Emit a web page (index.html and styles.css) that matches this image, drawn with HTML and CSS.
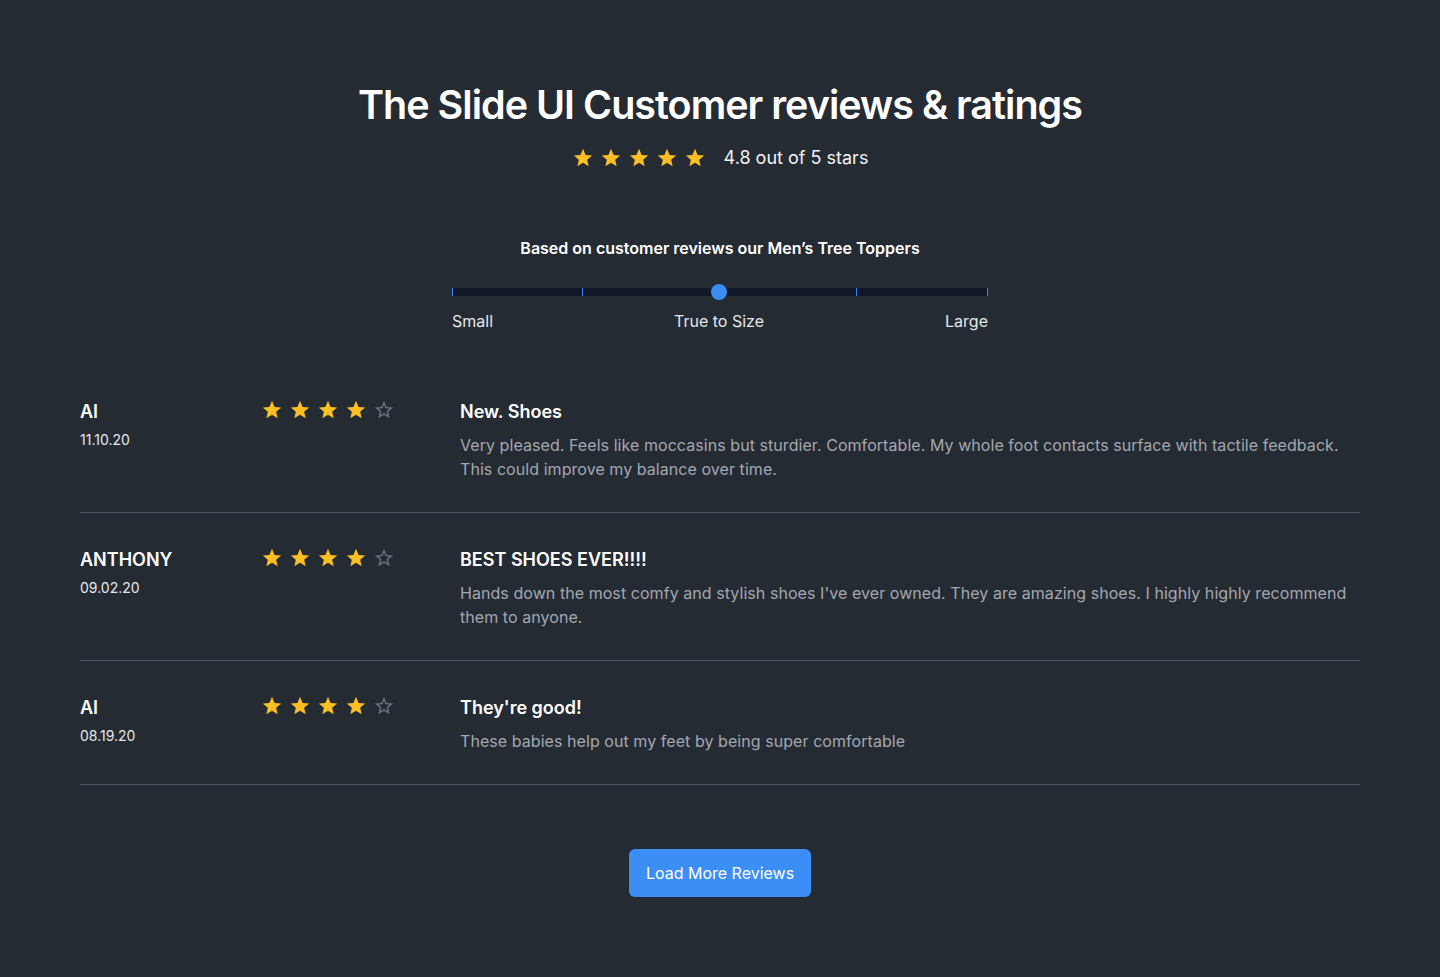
FILE: index.html
```html
<!DOCTYPE html>
<html lang="en">
<head>
<meta charset="utf-8">
<title>Customer reviews</title>
<link rel="stylesheet" href="styles.css">
</head>
<body>
<svg width="0" height="0" class="defs" aria-hidden="true">
  <defs>
    <symbol id="star" viewBox="0 0 24 24"><path d="M12 17.27L18.18 21l-1.64-7.03L22 9.24l-7.19-.61L12 2 9.19 8.63 2 9.24l5.46 4.73L5.82 21z"/></symbol>
    <symbol id="star-o" viewBox="0 0 24 24"><path d="M22 9.24l-7.19-.62L12 2 9.19 8.63 2 9.24l5.46 4.73L5.82 21 12 17.27 18.18 21l-1.63-7.03L22 9.24zM12 15.4l-3.76 2.27 1-4.28-3.32-2.88 4.38-.38L12 6.1l1.71 4.04 4.38.38-3.32 2.88 1 4.28L12 15.4z"/></symbol>
  </defs>
</svg>
<main class="page">
  <header class="header">
    <h1 class="title">The Slide UI Customer reviews &amp; ratings</h1>
    <div class="summary">
      <div class="stars">
        <svg class="star on"><use href="#star"/></svg>
        <svg class="star on"><use href="#star"/></svg>
        <svg class="star on"><use href="#star"/></svg>
        <svg class="star on"><use href="#star"/></svg>
        <svg class="star on"><use href="#star"/></svg>
      </div>
      <span class="summary-text">4.8 out of 5 stars</span>
    </div>
  </header>

  <section class="fit">
    <p class="fit-title">Based on customer reviews our Men’s Tree Toppers</p>
    <div class="track">
      <span class="tick t0"></span>
      <span class="tick t1"></span>
      <span class="tick t2"></span>
      <span class="tick t3"></span>
      <span class="dot"></span>
    </div>
    <div class="fit-labels">
      <span>Small</span>
      <span>True to Size</span>
      <span>Large</span>
    </div>
  </section>

  <section class="reviews">
    <article class="review">
      <div class="author">
        <div class="name">AI</div>
        <div class="date">11.10.20</div>
      </div>
      <div class="stars small">
        <svg class="star on"><use href="#star"/></svg>
        <svg class="star on"><use href="#star"/></svg>
        <svg class="star on"><use href="#star"/></svg>
        <svg class="star on"><use href="#star"/></svg>
        <svg class="star off"><use href="#star-o"/></svg>
      </div>
      <div class="content">
        <h3 class="review-title">New. Shoes</h3>
        <p class="review-body">Very pleased. Feels like moccasins but sturdier. Comfortable. My whole foot contacts surface with tactile feedback. This could improve my balance over time.</p>
      </div>
    </article>
    <article class="review">
      <div class="author">
        <div class="name">ANTHONY</div>
        <div class="date">09.02.20</div>
      </div>
      <div class="stars small">
        <svg class="star on"><use href="#star"/></svg>
        <svg class="star on"><use href="#star"/></svg>
        <svg class="star on"><use href="#star"/></svg>
        <svg class="star on"><use href="#star"/></svg>
        <svg class="star off"><use href="#star-o"/></svg>
      </div>
      <div class="content">
        <h3 class="review-title">BEST SHOES EVER!!!!</h3>
        <p class="review-body">Hands down the most comfy and stylish shoes I've ever owned. They are amazing shoes. I highly highly recommend them to anyone.</p>
      </div>
    </article>
    <article class="review">
      <div class="author">
        <div class="name">AI</div>
        <div class="date">08.19.20</div>
      </div>
      <div class="stars small">
        <svg class="star on"><use href="#star"/></svg>
        <svg class="star on"><use href="#star"/></svg>
        <svg class="star on"><use href="#star"/></svg>
        <svg class="star on"><use href="#star"/></svg>
        <svg class="star off"><use href="#star-o"/></svg>
      </div>
      <div class="content">
        <h3 class="review-title">They're good!</h3>
        <p class="review-body">These babies help out my feet by being super comfortable</p>
      </div>
    </article>
  </section>

  <div class="more">
    <button class="btn" type="button">Load More Reviews</button>
  </div>
</main>
</body>
</html>
```

FILE: styles.css
```css
* { box-sizing: border-box; }
html, body { margin: 0; padding: 0; }
body {
  background: #252b33;
  color: #ffffff;
  font-family: Inter, "Noto Sans", "Liberation Sans", sans-serif;
  min-height: 977px;
}
.defs { position: absolute; width: 0; height: 0; overflow: hidden; }
.page {
  width: 1280px;
  margin: 0 auto;
  padding: 85px 0 80px;
}
.header { display: flex; flex-direction: column; align-items: center; }
.title {
  margin: 0;
  font-size: 39.5px;
  line-height: 40px;
  font-weight: 600;
  letter-spacing: -0.025em;
}
.summary {
  margin-top: 19px;
  display: flex;
  align-items: center;
  height: 28px;
}
.stars { display: flex; gap: 6px; }
.star { width: 22px; height: 22px; display: block; }
.star.on { fill: #fbbf24; }
.star.off { fill: #6b7280; }
.summary-text {
  margin-left: 18px;
  font-size: 18px;
  line-height: 28px;
  color: #f3f4f6;
}
.fit {
  width: 536px;
  margin: 64px auto 0;
  display: flex;
  flex-direction: column;
}
.fit-title {
  margin: 0;
  text-align: center;
  font-size: 16px;
  line-height: 24px;
  font-weight: 600;
}
.track {
  position: relative;
  margin-top: 28px;
  height: 8px;
  background: #111827;
  border-radius: 2px;
}
.tick {
  position: absolute;
  top: 0;
  width: 1px;
  height: 8px;
  background: #3b82f6;
}
.t0 { left: 0; }
.t1 { left: 130px; }
.t2 { left: 404px; }
.t3 { right: 0; }
.dot {
  position: absolute;
  left: 267px;
  top: -4px;
  width: 16px;
  height: 16px;
  margin-left: -8px;
  border-radius: 50%;
  background: #3b8ef5;
}
.fit-labels {
  margin-top: 13px;
  display: flex;
  justify-content: space-between;
  font-size: 16px;
  line-height: 24px;
  color: #e5e7eb;
}
.reviews { margin-top: 32px; }
.review {
  display: grid;
  grid-template-columns: 182px 198px 1fr;
  padding: 33px 0 31px;
  border-bottom: 1px solid #4b5563;
}
.name {
  font-size: 18px;
  line-height: 28px;
  font-weight: 600;
}
.date {
  margin-top: 4px;
  font-size: 14px;
  line-height: 20px;
  color: #e5e7eb;
}
.stars.small { padding-top: 1px; height: 24px; margin-left: -1px; }
.review-title {
  margin: 0;
  font-size: 18px;
  line-height: 28px;
  font-weight: 600;
}
.review-body {
  margin: 7px 0 0;
  font-size: 16px;
  line-height: 24px;
  letter-spacing: 0.06px;
  color: #a3a8b0;
}
.more {
  display: flex;
  justify-content: center;
  margin-top: 64px;
}
.btn {
  font-family: inherit;
  font-size: 16px;
  line-height: 24px;
  color: #ffffff;
  background: #3b8ef5;
  border: 0;
  border-radius: 6px;
  padding: 12px 17px;
  cursor: pointer;
}
```
